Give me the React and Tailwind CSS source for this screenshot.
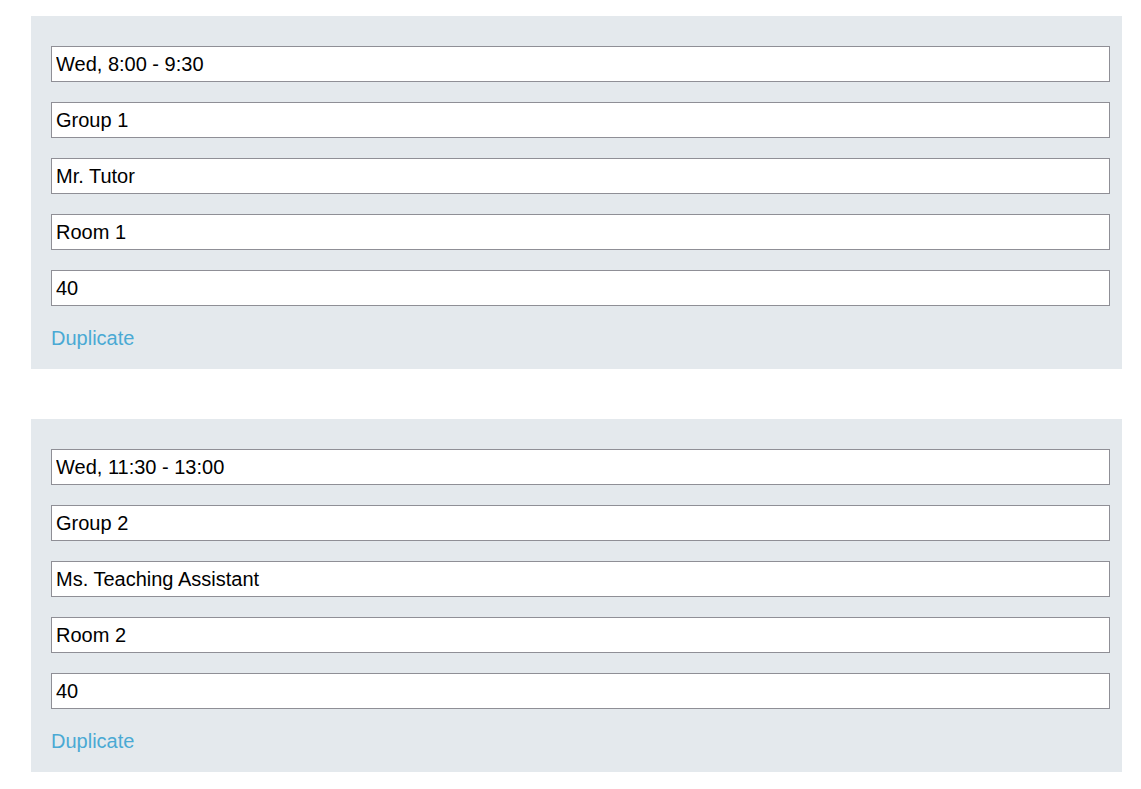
import React, { useState } from 'react';

const initialSlots = [
  { time: 'Wed, 8:00 - 9:30', group: 'Group 1', tutor: 'Mr. Tutor', room: 'Room 1', capacity: '40' },
  { time: 'Wed, 11:30 - 13:00', group: 'Group 2', tutor: 'Ms. Teaching Assistant', room: 'Room 2', capacity: '40' },
];

const fields = ['time', 'group', 'tutor', 'room', 'capacity'];

const SlotCard = ({ slot, onChange, onDuplicate }) => (
  <div className="bg-[#e4e9ed] pt-[30px] pb-[19px] pl-[20px] pr-[12px] flex flex-col gap-[20px]">
    {fields.map((f) => (
      <input
        key={f}
        type="text"
        value={slot[f]}
        onChange={(e) => onChange(f, e.target.value)}
        className="block w-full h-[36px] bg-white border border-[#8f8f96] px-[4px] text-[20px] leading-[23px] text-black outline-none"
      />
    ))}
    <div className="flex mt-[1px]">
      <button
        type="button"
        onClick={onDuplicate}
        className="block text-[20px] leading-[23px] text-[#4aa9d4] cursor-pointer"
      >
        Duplicate
      </button>
    </div>
  </div>
);

export default function App() {
  const [slots, setSlots] = useState(initialSlots);

  const updateSlot = (i, field, value) => {
    setSlots((prev) => prev.map((s, idx) => (idx === i ? { ...s, [field]: value } : s)));
  };

  const duplicateSlot = (i) => {
    setSlots((prev) => [...prev.slice(0, i + 1), { ...prev[i] }, ...prev.slice(i + 1)]);
  };

  return (
    <div className="min-h-screen bg-white pt-[16px] pl-[31px] pr-[19px] font-['Liberation_Sans',Arial,sans-serif]">
      <div className="flex flex-col gap-[50px]">
        {slots.map((slot, i) => (
          <SlotCard
            key={i}
            slot={slot}
            onChange={(f, v) => updateSlot(i, f, v)}
            onDuplicate={() => duplicateSlot(i)}
          />
        ))}
      </div>
    </div>
  );
}
